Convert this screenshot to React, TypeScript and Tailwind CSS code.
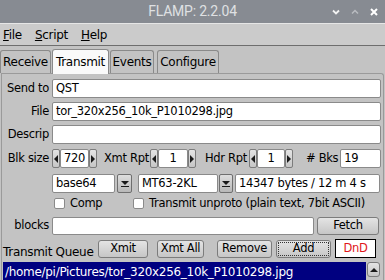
import { useState } from "react";

const font = "font-['DejaVu_Sans',sans-serif]";

const field =
  "h-[19px] bg-white border border-[#8a8a8a] rounded-[2px] px-[3px] flex items-center text-black whitespace-nowrap overflow-hidden";

const btn =
  "h-[18px] flex items-center justify-center rounded-[3px] border border-[#7c7c7c] bg-gradient-to-b from-[#e4e4e4] to-[#c6c6c6] text-black";

const Arrow = ({ dir }: { dir: "left" | "right" | "down" | "up" }) => {
  const pts = {
    left: "4,0 4,8 0,4",
    right: "0,0 0,8 4,4",
    down: "0,0 8,0 4,4",
    up: "0,4 8,4 4,0",
  }[dir];
  const w = dir === "left" || dir === "right" ? 4 : 8;
  const h = dir === "left" || dir === "right" ? 8 : 4;
  return (
    <svg width={w} height={h} viewBox={`0 0 ${w} ${h}`}>
      <polygon points={pts} fill="#1a1a1a" />
    </svg>
  );
};

const Spinner = ({ value, w }: { value: string; w: string }) => (
  <div className="flex h-[19px]">
    <div className="w-[8px] h-full flex items-center justify-center rounded-[2px] border border-[#7c7c7c] bg-gradient-to-b from-[#e4e4e4] to-[#c6c6c6]">
      <Arrow dir="left" />
    </div>
    <div className={`${field} ${w} justify-center !px-0`}>{value}</div>
    <div className="w-[8px] h-full flex items-center justify-center rounded-[2px] border border-[#7c7c7c] bg-gradient-to-b from-[#e4e4e4] to-[#c6c6c6]">
      <Arrow dir="right" />
    </div>
  </div>
);

const DropBtn = ({ w }: { w: string }) => (
  <div className={`${w} h-[19px] flex flex-col items-center justify-center gap-[1px] rounded-[2px] border border-[#6f6f6f] bg-gradient-to-b from-[#dedede] to-[#b8b8b8]`}>
    <Arrow dir="down" />
    <div className="w-[8px] h-[1px] bg-[#1a1a1a]" />
  </div>
);

const Check = ({ label, w }: { label: string; w?: string }) => (
  <div className={`flex items-center gap-[5px] ${w ?? ""}`}>
    <div className="w-[11px] h-[11px] bg-white border border-[#8a8a8a] rounded-[2px]" />
    <span>{label}</span>
  </div>
);

const Row = ({ label, value, mt }: { label: string; value: string; mt: string }) => (
  <div className={`flex items-center ${mt}`}>
    <span className="w-[50px] text-right pr-[3px]">{label}</span>
    <div className={`${field} w-[329px]`}>{value}</div>
  </div>
);

const App = () => {
  const [tab, setTab] = useState("Transmit");
  const tabs = [
    { name: "Receive", cls: "w-[51px]" },
    { name: "Transmit", cls: "w-[57px] ml-[1px]" },
    { name: "Events", cls: "w-[44px] ml-[1px]" },
    { name: "Configure", cls: "w-[62px] ml-[3px]" },
  ];

  return (
    <div className={`w-[385px] h-[280px] overflow-hidden bg-[#c3c3c3] text-[11.5px] tracking-[-0.3px] whitespace-nowrap text-black ${font}`}>
      {/* title bar */}
      <div className="h-[23px] bg-[#878b92] grid grid-cols-[1fr_auto_1fr] items-center">
        <div />
        <span className="font-['Roboto',sans-serif] text-[14px] text-[#dfe0e2] tracking-[-0.2px]">FLAMP: 2.2.04</span>
        <div className="flex justify-end items-center gap-[11px] pr-[7px]">
          <svg width="8" height="6" viewBox="0 0 8 6">
            <path d="M1 1.5 L4 4.5 L7 1.5" stroke="#f2f2f2" strokeWidth="1.8" fill="none" />
          </svg>
          <svg width="8" height="6" viewBox="0 0 8 6">
            <path d="M1 4.5 L4 1.5 L7 4.5" stroke="#b9bcc1" strokeWidth="1.5" fill="none" />
          </svg>
          <svg width="8" height="8" viewBox="0 0 8 8">
            <path d="M1 1 L7 7 M7 1 L1 7" stroke="#ffffff" strokeWidth="2" fill="none" />
          </svg>
        </div>
      </div>

      {/* menu bar */}
      <div className="h-[23px] bg-[#cbcbcb] border-t border-[#e6e6e6] border-b border-b-[#6e6e6e] flex items-center gap-[13px] pl-[3px] text-[12px]">
        <span><u>F</u>ile</span>
        <span><u>S</u>cript</span>
        <span><u>H</u>elp</span>
      </div>

      {/* tabs */}
      <div className="flex items-end h-[27px]">
        {tabs.map((t) => {
          const active = tab === t.name;
          return (
            <div
              key={t.name}
              onClick={() => setTab(t.name)}
              className={`${t.cls} flex items-center justify-center rounded-t-[3px] border border-b-0 border-[#8a8a8a] text-[12px] ${
                active ? "h-[25px] bg-[#fafafa] -mb-[1px] relative z-10" : "h-[23px] bg-[#c3c3c3]"
              }`}
            >
              {t.name}
            </div>
          );
        })}
      </div>

      {/* panel */}
      <div className="h-[208px] ml-[1px] mr-[1px] border-t border-l border-r border-[#9a9a9a] rounded-tr-[3px] flex flex-col">
        <Row label="Send to" value="QST" mt="mt-[5px]" />
        <Row label="File" value="tor_320x256_10k_P1010298.jpg" mt="mt-[4px]" />
        <Row label="Descrip" value="" mt="mt-[4px]" />

        <div className="flex items-center mt-[5px]">
          <span className="w-[50px] text-right pr-[3px]">Blk size</span>
          <Spinner value="720" w="w-[29px]" />
          <span className="ml-[7px] mr-[1px]">Xmt Rpt</span>
          <Spinner value="1" w="w-[30px]" />
          <span className="ml-[9px] mr-[2px]">Hdr Rpt</span>
          <Spinner value="1" w="w-[28px]" />
          <span className="ml-[13px] mr-[2px]"># Bks</span>
          <div className={`${field} w-[41px]`}>19</div>
        </div>

        <div className="flex items-center mt-[6px] pl-[50px]">
          <div className={`${field} w-[63px]`}>base64</div>
          <DropBtn w="w-[15px] ml-[2px]" />
          <div className={`${field} w-[80px] ml-[6px]`}>MT63-2KL</div>
          <DropBtn w="w-[14px] ml-[1px]" />
          <div className={`${field} w-[145px] ml-[2px]`}>14347 bytes / 12 m 4 s</div>
        </div>

        <div className="flex items-center mt-[3px] h-[15px] pl-[52px]">
          <Check label="Comp" w="w-[79px]" />
          <Check label="Transmit unproto (plain text, 7bit ASCII)" />
        </div>

        <div className="flex items-center mt-[6px]">
          <span className="w-[50px] text-right pr-[3px]">blocks</span>
          <div className={`${field} w-[262px] !h-[18px]`} />
          <div className={`${btn} w-[62px] ml-[3px]`}>Fetch</div>
        </div>

        <div className="flex items-center mt-[4px] h-[19px]">
          <span className="w-[96px] pl-[1px] self-end leading-none text-[12px]">Transmit Queue</span>
          <div className={`${btn} w-[50px]`}>Xmit</div>
          <div className={`${btn} w-[47px] ml-[9px]`}>Xmt All</div>
          <div className={`${btn} w-[55px] ml-[13px]`}>Remove</div>
          <div className={`${btn} w-[55px] ml-[4px] outline-1 outline-dotted outline-[#333] outline-offset-[-3px]`}>Add</div>
          <div className="w-[41px] h-[19px] ml-[4px] bg-white border border-black flex items-center justify-center text-[#e0161b]">DnD</div>
        </div>

        <div className="flex mt-[4px] ml-[1px] mr-[3px] h-[20px]">
          <div className="flex-1 bg-[#000080] text-white flex items-start pl-[2px] pt-[1px] overflow-hidden text-[12px]">
            /home/pi/Pictures/tor_320x256_10k_P1010298.jpg
          </div>
          <div className="w-[14px] bg-[#c3c3c3] flex flex-col pl-[1px]">
            <div className={`${btn} w-[13px] !h-[15px]`}><Arrow dir="up" /></div>
          </div>
        </div>
      </div>
    </div>
  );
};

export default App;
